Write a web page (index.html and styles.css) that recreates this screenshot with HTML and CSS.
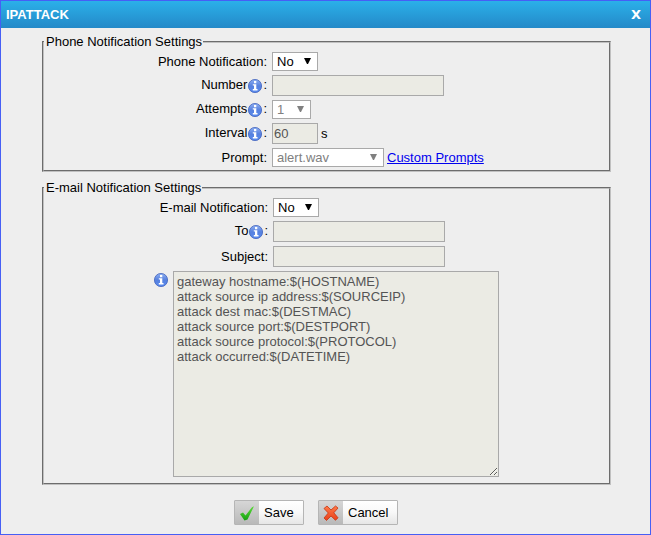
FILE: index.html
```html
<!DOCTYPE html>
<html lang="en">
<head>
<meta charset="utf-8">
<title>IPATTACK</title>
<link rel="stylesheet" href="styles.css">
</head>
<body>
<svg width="0" height="0" class="defs" aria-hidden="true">
  <defs>
    <linearGradient id="ball" x1="0" y1="0" x2="0" y2="1"><stop offset="0" stop-color="#8fb0f2"/><stop offset=".5" stop-color="#5680de"/><stop offset="1" stop-color="#5a8cf0"/></linearGradient>
    <linearGradient id="green" x1="0" y1="0" x2="0" y2="1"><stop offset="0" stop-color="#5fdc3c"/><stop offset="1" stop-color="#14a010"/></linearGradient>
    <linearGradient id="red" x1="0" y1="0" x2="0" y2="1"><stop offset="0" stop-color="#ff7a48"/><stop offset="1" stop-color="#e8401a"/></linearGradient>
    <symbol id="info" viewBox="0 0 14 14"><circle cx="7" cy="7" r="6.6" fill="url(#ball)" stroke="#4263bd" stroke-width=".8"/><path d="M6 2h2.300v2.200H6zM4.800 5.200h3.500v4.900h1.200v1.500H4.800v-1.500H6V6.600H4.800z" fill="#fff"/></symbol>
    <symbol id="arrow" viewBox="0 0 7 6"><path d="M0 0h7L4 6H3z" fill="currentColor"/></symbol>
  </defs>
</svg>
<div class="dialog">
  <header class="titlebar"><span>IPATTACK</span><span class="close">X</span></header>
  <main class="content">
    <fieldset class="group phone">
      <legend>Phone Notification Settings</legend>
      <div class="row"><label>Phone Notification:</label><div class="select short">No<svg><use href="#arrow"/></svg></div></div>
      <div class="row tall"><label class="hinted">Number<svg class="info"><use href="#info"/></svg>:</label><input class="wide" disabled></div>
      <div class="row"><label class="hinted">Attempts<svg class="info"><use href="#info"/></svg>:</label><div class="select tiny off">1<svg><use href="#arrow"/></svg></div></div>
      <div class="row tall"><label class="hinted">Interval<svg class="info"><use href="#info"/></svg>:</label><input class="small" value="60" disabled><span class="unit">s</span></div>
      <div class="row"><label>Prompt:</label><div class="select prompt off">alert.wav<svg><use href="#arrow"/></svg></div><a href="#">Custom Prompts</a></div>
    </fieldset>
    <fieldset class="group email">
      <legend>E-mail Notification Settings</legend>
      <div class="row"><label>E-mail Notification:</label><div class="select short">No<svg><use href="#arrow"/></svg></div></div>
      <div class="row tall"><label class="hinted">To<svg class="info"><use href="#info"/></svg>:</label><input class="wide" disabled></div>
      <div class="row tall"><label>Subject:</label><input class="wide" disabled></div>
      <div class="message"><svg class="info"><use href="#info"/></svg><textarea disabled>gateway hostname:$(HOSTNAME)
attack source ip address:$(SOURCEIP)
attack dest mac:$(DESTMAC)
attack source port:$(DESTPORT)
attack source protocol:$(PROTOCOL)
attack occurred:$(DATETIME)</textarea></div>
    </fieldset>
  </main>
  <footer class="actions">
    <button class="save"><span class="icon"><svg viewBox="0 0 24 23"><path d="M5 13l3-1.500 2.500 3L17 6.200l2-1L12.500 18.500 9.500 19.500z" fill="url(#green)"/></svg></span><span>Save</span></button>
    <button class="cancel"><span class="icon"><svg viewBox="0 0 24 23"><path d="M5 7.500l3-2.500 4 4 4.500-4 2.500 2-4.200 4.800 4.200 5-2.500 2.500-4.500-4.300L7.500 19.500 5 17l4.300-5z" fill="url(#red)" stroke="#c8320f" stroke-width=".8"/></svg></span><span>Cancel</span></button>
  </footer>
</div>
</body>
</html>
```
FILE: styles.css
```css
* { box-sizing: border-box; }
body { margin: 0; font: 13px/15px "Liberation Sans", Arial, sans-serif; color: #000; }
.defs { position: absolute; }
.dialog { width: 651px; height: 535px; border: 1px solid #465ff5; background: #eee; overflow: hidden; }
.titlebar { height: 27px; padding: 0 9px 0 5px; display: flex; align-items: center; justify-content: space-between; background: linear-gradient(#2bb0e9, #2489c8); color: #fff; font-weight: bold; font-size: 13px; }
.close { font: bold 13px "DejaVu Sans", Verdana, sans-serif; }
.content { padding: 7px 39px 0 41px; }
.group { width: 569px; margin: 0; padding: 0; border: 2px groove #c0c0c0; }
.group legend { height: 14px; line-height: 14px; padding: 0 1px 0 2px; white-space: nowrap; }
.phone { height: 137px; padding-top: 3px; }
.email { height: 304px; margin-top: 9px; padding-top: 3px; }
.row { display: flex; align-items: center; height: 19px; margin-bottom: 4px; }
.row.tall { height: 21px; }
.row label { width: 223px; margin-right: 5px; display: flex; justify-content: flex-end; align-items: center; white-space: nowrap; }
.email .row label { width: 224px; }
.row .hinted { margin-bottom: 2px; }
.info { width: 14px; height: 14px; flex: none; }
.row .info { margin: 2px 1px 0 1px; }
.select { height: 19px; border: 1px solid #a9a9a9; background: #fff; display: flex; align-items: center; justify-content: space-between; padding: 0 6px 0 4px; }
.select svg { width: 7px; height: 6px; margin-bottom: 2px; }
.off { color: #808080; }
.short { width: 46px; }
.tiny { width: 39px; }
.prompt { width: 112px; }
input, textarea { font: inherit; color: #545454; background: #ebebe4; border: 1px solid #a9a9a9; margin: 0; }
input { height: 21px; padding: 1px; }
.wide { width: 172px; }
.small { width: 46px; }
.unit { margin-left: 3px; }
.row a { margin-left: 3px; color: #00e; }
.email .row.tall + .row.tall { margin-top: 4px; }
.message { display: flex; margin-left: 110px; }
.message .info { margin: 2px 5px 0 0; }
textarea { width: 326px; height: 206px; padding: 2px 3px; resize: both; overflow: auto; }
.actions { display: flex; gap: 14px; margin: 15px 0 0 233px; }
button { display: flex; height: 25px; padding: 0; border: 1px solid #b5b5b5; border-radius: 1px; background: linear-gradient(#fff, #f8f8f8 50%, #e6e6e6); font: inherit; color: #000; line-height: 23px; text-align: left; }
.save { width: 70px; }
.cancel { width: 80px; }
.icon { width: 24px; height: 23px; margin-right: 5px; background: linear-gradient(#d6d6d6, #b9b9b9); }
.icon svg { display: block; width: 24px; height: 23px; }
```
